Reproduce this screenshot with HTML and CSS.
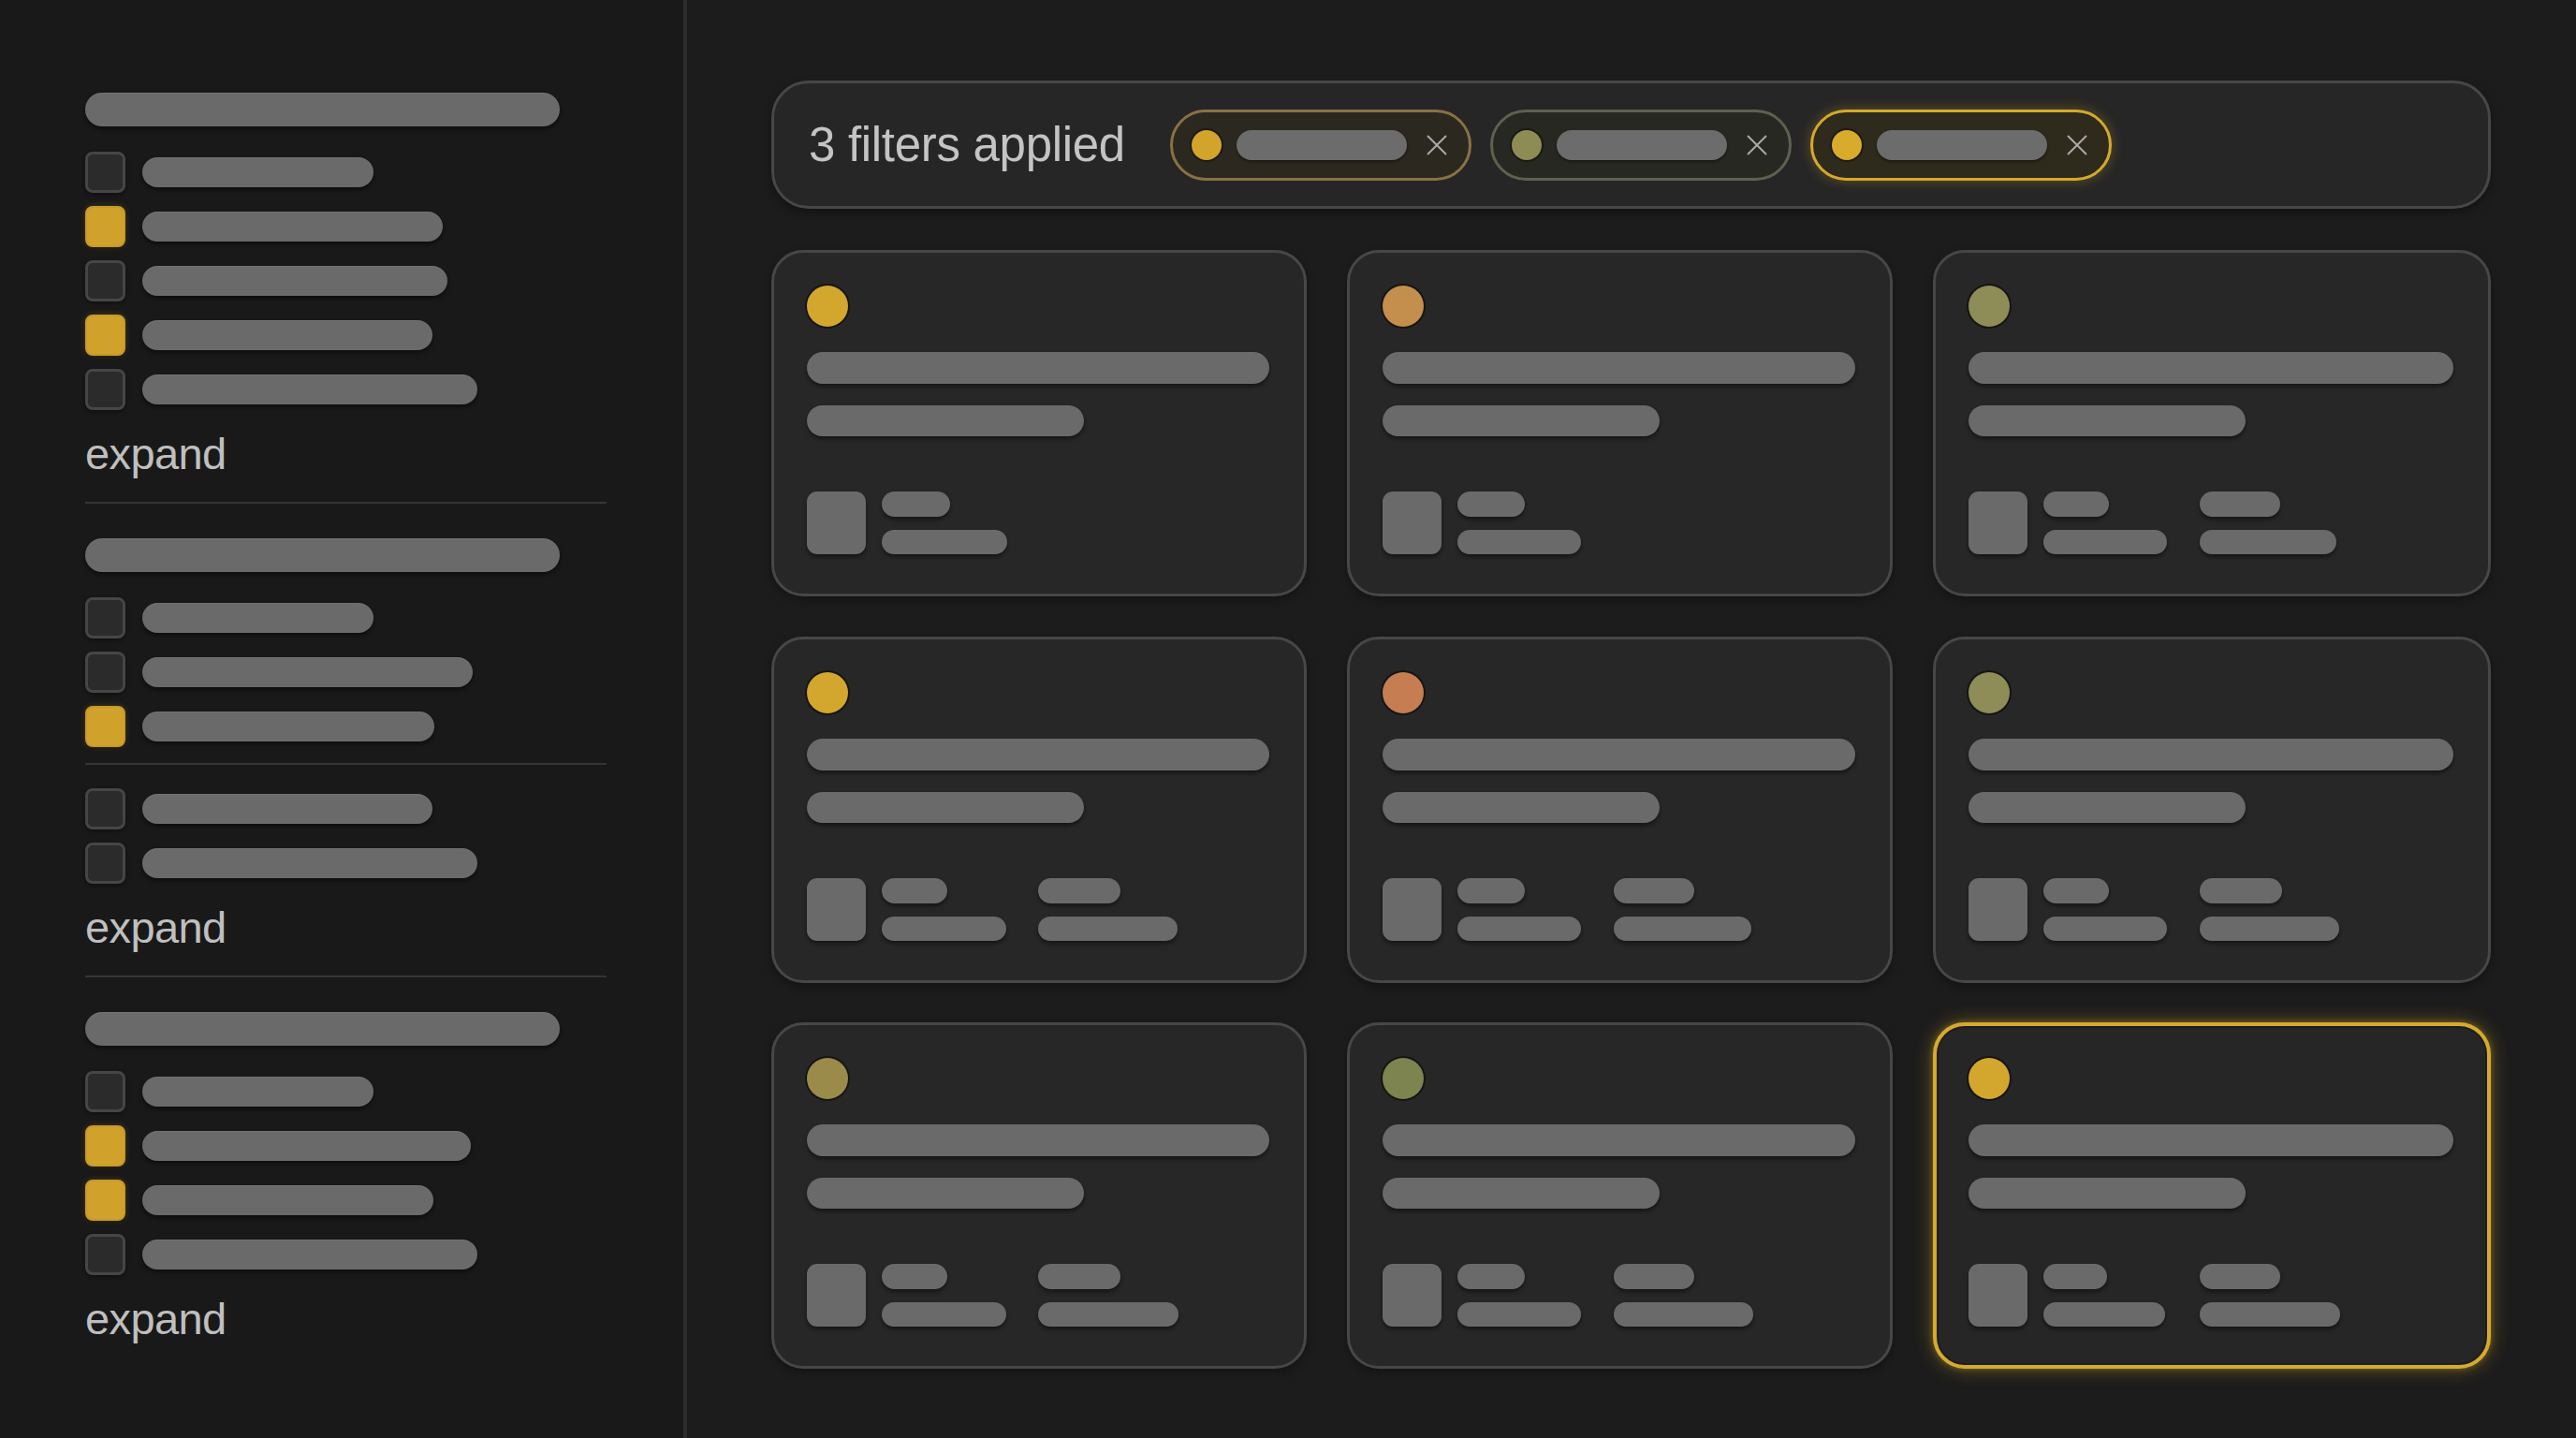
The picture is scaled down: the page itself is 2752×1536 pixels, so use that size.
FILE: index.html
```html
<!DOCTYPE html>
<html>
<head>
<meta charset="utf-8">
<link rel="stylesheet" href="styles.css">
</head>
<body>
<div class="app">
  <aside class="sidebar">
    <section class="group">
      <div class="head-bar"></div>
      <div class="rows">
        <div class="row"><span class="cb"></span><span class="bar" style="width:247px"></span></div>
        <div class="row"><span class="cb on"></span><span class="bar" style="width:321px"></span></div>
        <div class="row"><span class="cb"></span><span class="bar" style="width:326px"></span></div>
        <div class="row"><span class="cb on"></span><span class="bar" style="width:310px"></span></div>
        <div class="row"><span class="cb"></span><span class="bar" style="width:358px"></span></div>
      </div>
      <div class="expand">expand</div>
    </section>
    <hr class="divider">
    <section class="group">
      <div class="head-bar"></div>
      <div class="rows">
        <div class="row"><span class="cb"></span><span class="bar" style="width:247px"></span></div>
        <div class="row"><span class="cb"></span><span class="bar" style="width:353px"></span></div>
        <div class="row"><span class="cb on"></span><span class="bar" style="width:312px"></span></div>
      </div>
      <hr class="divider inner">
      <div class="rows">
        <div class="row"><span class="cb"></span><span class="bar" style="width:310px"></span></div>
        <div class="row"><span class="cb"></span><span class="bar" style="width:358px"></span></div>
      </div>
      <div class="expand">expand</div>
    </section>
    <hr class="divider">
    <section class="group">
      <div class="head-bar"></div>
      <div class="rows">
        <div class="row"><span class="cb"></span><span class="bar" style="width:247px"></span></div>
        <div class="row"><span class="cb on"></span><span class="bar" style="width:351px"></span></div>
        <div class="row"><span class="cb on"></span><span class="bar" style="width:311px"></span></div>
        <div class="row"><span class="cb"></span><span class="bar" style="width:358px"></span></div>
      </div>
      <div class="expand">expand</div>
    </section>
  </aside>

  <main class="main">
    <div class="filter-bar">
      <span class="filter-label">3 filters applied</span>
      <div class="chips">
        <div class="chip chip-amber">
          <span class="chip-dot"></span><span class="chip-bar"></span>
          <svg class="chip-x" viewBox="0 0 26 26"><path d="M3 3 L23 23 M23 3 L3 23"/></svg>
        </div>
        <div class="chip chip-olive">
          <span class="chip-dot"></span><span class="chip-bar"></span>
          <svg class="chip-x" viewBox="0 0 26 26"><path d="M3 3 L23 23 M23 3 L3 23"/></svg>
        </div>
        <div class="chip chip-active">
          <span class="chip-dot"></span><span class="chip-bar"></span>
          <svg class="chip-x" viewBox="0 0 26 26"><path d="M3 3 L23 23 M23 3 L3 23"/></svg>
        </div>
      </div>
    </div>

    <div class="grid">
      <div class="card">
        <span class="dot gold"></span>
        <span class="title-bar"></span>
        <span class="sub-bar"></span>
        <div class="foot">
          <span class="thumb"></span>
          <div class="meta"><span class="m1" style="width:73px"></span><span class="m2" style="width:134px"></span></div>
        </div>
      </div>
      <div class="card">
        <span class="dot tan"></span>
        <span class="title-bar"></span>
        <span class="sub-bar"></span>
        <div class="foot">
          <span class="thumb"></span>
          <div class="meta"><span class="m1" style="width:72px"></span><span class="m2" style="width:132px"></span></div>
        </div>
      </div>
      <div class="card">
        <span class="dot olive"></span>
        <span class="title-bar"></span>
        <span class="sub-bar"></span>
        <div class="foot">
          <span class="thumb"></span>
          <div class="meta"><span class="m1" style="width:70px"></span><span class="m2" style="width:132px"></span></div>
          <div class="meta second"><span class="m1" style="width:86px"></span><span class="m2" style="width:146px"></span></div>
        </div>
      </div>

      <div class="card">
        <span class="dot gold"></span>
        <span class="title-bar"></span>
        <span class="sub-bar"></span>
        <div class="foot">
          <span class="thumb"></span>
          <div class="meta"><span class="m1" style="width:70px"></span><span class="m2" style="width:133px"></span></div>
          <div class="meta second"><span class="m1" style="width:88px"></span><span class="m2" style="width:149px"></span></div>
        </div>
      </div>
      <div class="card">
        <span class="dot rust"></span>
        <span class="title-bar"></span>
        <span class="sub-bar"></span>
        <div class="foot">
          <span class="thumb"></span>
          <div class="meta"><span class="m1" style="width:72px"></span><span class="m2" style="width:132px"></span></div>
          <div class="meta second"><span class="m1" style="width:86px"></span><span class="m2" style="width:147px"></span></div>
        </div>
      </div>
      <div class="card">
        <span class="dot olive"></span>
        <span class="title-bar"></span>
        <span class="sub-bar"></span>
        <div class="foot">
          <span class="thumb"></span>
          <div class="meta"><span class="m1" style="width:70px"></span><span class="m2" style="width:132px"></span></div>
          <div class="meta second"><span class="m1" style="width:88px"></span><span class="m2" style="width:149px"></span></div>
        </div>
      </div>

      <div class="card">
        <span class="dot khaki"></span>
        <span class="title-bar"></span>
        <span class="sub-bar"></span>
        <div class="foot">
          <span class="thumb"></span>
          <div class="meta"><span class="m1" style="width:70px"></span><span class="m2" style="width:133px"></span></div>
          <div class="meta second"><span class="m1" style="width:88px"></span><span class="m2" style="width:150px"></span></div>
        </div>
      </div>
      <div class="card">
        <span class="dot moss"></span>
        <span class="title-bar"></span>
        <span class="sub-bar"></span>
        <div class="foot">
          <span class="thumb"></span>
          <div class="meta"><span class="m1" style="width:72px"></span><span class="m2" style="width:132px"></span></div>
          <div class="meta second"><span class="m1" style="width:86px"></span><span class="m2" style="width:149px"></span></div>
        </div>
      </div>
      <div class="card selected">
        <span class="dot gold"></span>
        <span class="title-bar"></span>
        <span class="sub-bar"></span>
        <div class="foot">
          <span class="thumb"></span>
          <div class="meta"><span class="m1" style="width:68px"></span><span class="m2" style="width:130px"></span></div>
          <div class="meta second"><span class="m1" style="width:86px"></span><span class="m2" style="width:150px"></span></div>
        </div>
      </div>
    </div>
  </main>
</div>
</body>
</html>
```
FILE: styles.css
```css
* { box-sizing: border-box; }

html, body {
  margin: 0;
  padding: 0;
  background: #1c1c1c;
  font-family: "Liberation Sans", Arial, sans-serif;
}

.app {
  display: flex;
  width: 2752px;
  height: 1536px;
  overflow: hidden;
}

/* ---------- sidebar ---------- */
.sidebar {
  width: 734px;
  flex: none;
  background: #191919;
  border-right: 4px solid #2c2c2c;
  padding: 99px 0 0 91px;
}

.head-bar {
  width: 507px;
  height: 36px;
  border-radius: 18px;
  background: #6a6a6a;
  box-shadow: 0 3px 4px rgba(0, 0, 0, 0.45), inset 0 1px 0 rgba(255, 255, 255, 0.06);
  margin-bottom: 27px;
}

.rows {
  display: flex;
  flex-direction: column;
  gap: 14px;
}

.row {
  display: flex;
  align-items: center;
  gap: 18px;
  height: 44px;
}

.cb {
  width: 43px;
  height: 44px;
  flex: none;
  border-radius: 8px;
  background: #2b2b2b;
  border: 3px solid #464646;
  box-shadow: 0 2px 4px rgba(0, 0, 0, 0.4);
}

.cb.on {
  background: #d0a22c;
  border: 2px solid #c7992a;
  box-shadow: 0 0 6px rgba(208, 162, 44, 0.25), 0 2px 3px rgba(0, 0, 0, 0.4);
}

.bar {
  height: 32px;
  border-radius: 16px;
  background: #6a6a6a;
  box-shadow: 0 3px 4px rgba(0, 0, 0, 0.45), inset 0 1px 0 rgba(255, 255, 255, 0.06);
}

.expand {
  margin-top: 22px;
  font-size: 47px;
  line-height: 50px;
  color: #bfbfbf;
  letter-spacing: -0.6px;
}

.divider {
  width: 557px;
  height: 2px;
  border: 0;
  margin: 26px 0 37px 0;
  background: #353535;
}

.divider.inner {
  margin: 17px 0 25px 0;
}

/* ---------- main ---------- */
.main {
  flex: 1;
  padding: 86px 91px 0 90px;
}

.filter-bar {
  height: 137px;
  border: 3px solid #474747;
  border-radius: 40px;
  background: #262626;
  display: flex;
  align-items: center;
  padding-left: 37px;
  box-shadow: 0 4px 10px rgba(0, 0, 0, 0.35);
}

.filter-label {
  font-size: 51px;
  color: #c4c4c4;
  letter-spacing: -0.3px;
  width: 386px;
  flex: none;
}

.chips {
  display: flex;
  gap: 20px;
}

.chip {
  width: 322px;
  height: 76px;
  border-radius: 38px;
  border: 3px solid #8a7143;
  background: #2b2820;
  display: flex;
  align-items: center;
  padding-left: 20px;
}

.chip-dot {
  width: 32px;
  height: 32px;
  border-radius: 50%;
  background: #d2a42b;
  flex: none;
  box-shadow: 0 0 0 2px rgba(0, 0, 0, 0.35);
}

.chip-bar {
  width: 182px;
  height: 32px;
  border-radius: 16px;
  background: #6c6c6c;
  margin-left: 16px;
  flex: none;
  box-shadow: 0 2px 3px rgba(0, 0, 0, 0.4);
}

.chip-x {
  width: 26px;
  height: 26px;
  margin-left: 19px;
  flex: none;
}

.chip-x path {
  stroke: #a9a9a9;
  stroke-width: 2;
  fill: none;
}

.chip-olive {
  border-color: #5d614e;
  background: #272822;
}

.chip-olive .chip-dot {
  background: #8d8c55;
}

.chip-active {
  border-color: #d5a92c;
  background: #2e2a1c;
  box-shadow: 0 0 14px rgba(213, 169, 44, 0.35);
}

.chip-active .chip-dot {
  background: #d9ab2d;
}

/* ---------- cards ---------- */
.grid {
  margin-top: 44px;
  display: grid;
  grid-template-columns: 572fr 583fr 596fr;
  grid-auto-rows: 370px;
  column-gap: 43px;
  row-gap: 42.5px;
}

.card {
  border: 3px solid #474747;
  border-radius: 34px;
  background: #272727;
  padding: 35px 37px 0 35px;
  display: flex;
  flex-direction: column;
  align-items: flex-start;
  box-shadow: 0 4px 10px rgba(0, 0, 0, 0.3);
}

.card.selected {
  border: 4px solid #d6aa2e;
  background: #262626;
  padding: 34px 36px 0 34px;
  box-shadow: 0 0 20px rgba(214, 170, 46, 0.4), 0 0 6px rgba(214, 170, 46, 0.35), inset 0 0 0 2px #1e1e1e;
}

.dot {
  width: 44px;
  height: 44px;
  border-radius: 50%;
  flex: none;
  box-shadow: 0 0 0 2px rgba(0, 0, 0, 0.45);
}

.dot.gold { background: #d3a62d; }
.dot.tan { background: #c48e4c; }
.dot.olive { background: #8e8c57; }
.dot.rust { background: #c67d51; }
.dot.khaki { background: #9a8b4b; }
.dot.moss { background: #7d8450; }

.title-bar {
  width: 100%;
  height: 34px;
  margin-top: 27px;
  border-radius: 17px;
  background: #6a6a6a;
  box-shadow: 0 3px 4px rgba(0, 0, 0, 0.45);
}

.sub-bar {
  width: 296px;
  height: 33px;
  margin-top: 23px;
  border-radius: 17px;
  background: #6a6a6a;
  box-shadow: 0 3px 4px rgba(0, 0, 0, 0.45);
}

.foot {
  margin-top: 59px;
  display: flex;
  align-items: flex-start;
}

.thumb {
  width: 63px;
  height: 67px;
  border-radius: 11px;
  background: #6a6a6a;
  box-shadow: 0 3px 4px rgba(0, 0, 0, 0.45);
  flex: none;
}

.meta {
  width: 133px;
  margin-left: 17px;
  display: flex;
  flex-direction: column;
  gap: 14px;
}

.meta.second {
  margin-left: 34px;
}

.m1, .m2 {
  display: block;
  border-radius: 14px;
  background: #6a6a6a;
  box-shadow: 0 3px 4px rgba(0, 0, 0, 0.45);
}

.m1 { height: 27px; }
.m2 { height: 26px; }
```
